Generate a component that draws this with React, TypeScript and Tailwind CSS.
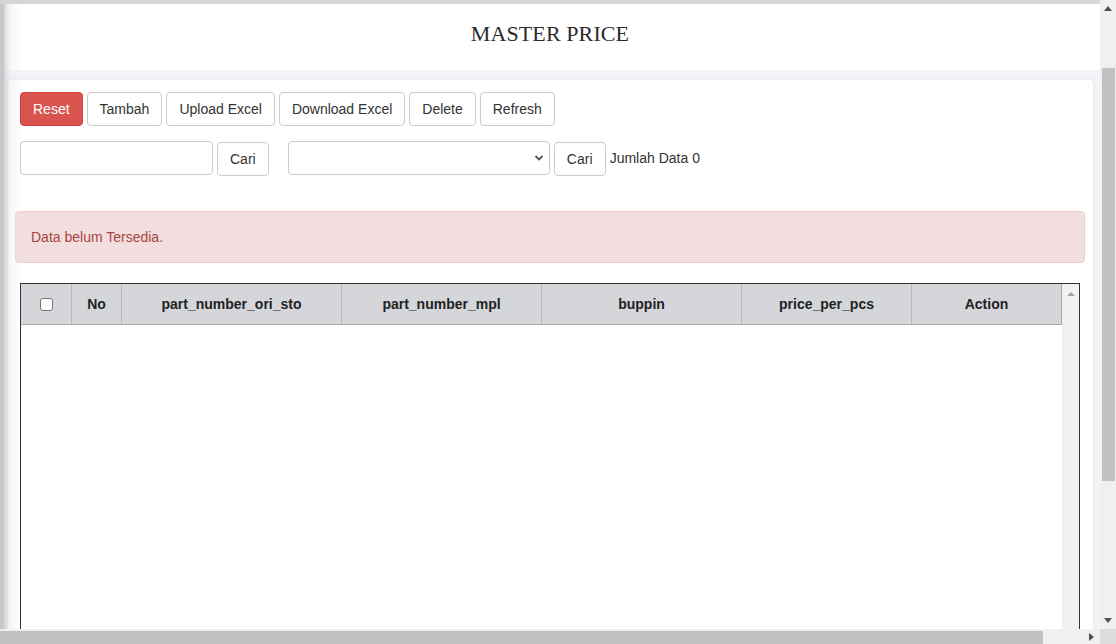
const cols = [
  { label: "No", w: "w-[50px]" },
  { label: "part_number_ori_sto", w: "w-[220px]" },
  { label: "part_number_mpl", w: "w-[200px]" },
  { label: "buppin", w: "w-[200px]" },
  { label: "price_per_pcs", w: "w-[170px]" },
  { label: "Action", w: "w-[150px]" },
];

function Btn({ children, className = "" }: { children: React.ReactNode; className?: string }) {
  return (
    <button
      className={
        "h-[34px] px-[12px] rounded-[4px] border text-[14px] leading-none " +
        (className || "bg-white border-[#ccc] text-[#333]")
      }
    >
      {children}
    </button>
  );
}

export default function App() {
  return (
    <div className="relative w-[1116px] h-[644px] overflow-hidden bg-[#f3f4f8] font-['Liberation_Sans',Arial,sans-serif] text-[#333]">
      <div className="flex h-[629px]">
        {/* page */}
        <div className="relative flex-1 flex flex-col overflow-hidden">
          <div className="shrink-0 h-[4px] bg-[#d6d6d6]" />
          <div className="shrink-0 h-[66px] bg-white flex items-center justify-center">
            <h1 className="text-[22px] text-[#2b2b2b] font-['Liberation_Serif','Times_New_Roman',serif] tracking-[0.1px] mt-[-8px]">
              MASTER PRICE
            </h1>
          </div>
          <div className="flex-1 min-h-0 overflow-hidden pt-[10px] pl-[8px] pr-[7px]">
            <div className="bg-white rounded-[4px] shadow-[0_0_6px_rgba(0,0,0,0.06)] h-[700px] pt-[12px] pl-[12px] pr-[13px]">
              <div className="flex gap-[4px]">
                <Btn className="bg-[#d9534f] border-[#d43f3a] text-white">Reset</Btn>
                <Btn>Tambah</Btn>
                <Btn>Upload Excel</Btn>
                <Btn>Download Excel</Btn>
                <Btn>Delete</Btn>
                <Btn>Refresh</Btn>
              </div>

              <div className="flex items-start mt-[15px]">
                <input className="w-[193px] h-[34px] border border-[#ccc] rounded-[4px] px-3 text-[14px]" />
                <div className="ml-[4px] mt-[1px]">
                  <Btn>Cari</Btn>
                </div>
                <div className="relative ml-[19px] w-[262px] h-[34px] border border-[#ccc] rounded-[4px] bg-white">
                  <svg className="absolute right-[5px] top-[12px]" width="10" height="8" viewBox="0 0 10 8">
                    <path d="M1.5 2 L5 5.5 L8.5 2" fill="none" stroke="#555" strokeWidth="1.8" />
                  </svg>
                </div>
                <div className="ml-[4px] mt-[1px]">
                  <Btn className="bg-white border-[#ccc] text-[#333] w-[52px]">Cari</Btn>
                </div>
                <span className="ml-[4px] mt-[10px] text-[14px] leading-none">Jumlah Data 0</span>
              </div>

              <div className="mt-[35px] ml-[-5px] mr-[-5px] h-[52px] flex items-center px-[15px] bg-[#f2dede] border border-[#ebccd1] rounded-[4px] text-[#a94442] text-[14px]">
                Data belum Tersedia.
              </div>

              <div className="mt-[20px] h-[400px] border border-[#333] border-b-0 flex">
                <div className="flex-1">
                  <div className="flex h-[41px] bg-[#d5d6da] border-b border-[#a9a9a9]">
                    <div className="w-[51px] flex items-center justify-center border-r border-[#b7b8bb]">
                      <span className="w-[13px] h-[13px] rounded-[3px] border border-[#767676] bg-white" />
                    </div>
                    {cols.map((c, i) => (
                      <div
                        key={c.label}
                        className={
                          c.w +
                          " flex items-center justify-center text-[14px] font-bold text-[#222] " +
                          (i < cols.length - 1 ? "border-r border-[#b7b8bb]" : "border-r border-[#a9a9a9]")
                        }
                      >
                        {c.label}
                      </div>
                    ))}
                  </div>
                </div>
                <div className="w-[17px] bg-[#f1f1f1] flex justify-center pt-[7px]">
                  <svg width="8" height="5" viewBox="0 0 8 5">
                    <path d="M0 5 L4 1 L8 5 Z" fill="#a3a3a3" />
                  </svg>
                </div>
              </div>
            </div>
          </div>
          {/* left shadow */}
          <div className="pointer-events-none absolute left-0 top-[4px] bottom-0 w-[20px] bg-gradient-to-r from-[#c4c4c8] via-[#ececee]/50 to-transparent" />
          <div className="pointer-events-none absolute left-0 top-[4px] bottom-0 w-[4px] bg-[#c7c7ca]" />
        </div>

        {/* vertical scrollbar */}
        <div className="w-[16px] bg-[#f0f0f0] flex flex-col items-center">
          <div className="h-[17px] flex items-center justify-center">
            <svg width="8" height="5" viewBox="0 0 8 5">
              <path d="M0 5 L4 0 L8 5 Z" fill="#505050" />
            </svg>
          </div>
          <div className="mt-[51px] w-[13px] h-[413px] bg-[#c1c1c1]" />
          <div className="flex-1" />
          <div className="h-[17px] flex items-center justify-center">
            <svg width="8" height="5" viewBox="0 0 8 5">
              <path d="M0 0 L8 0 L4 5 Z" fill="#505050" />
            </svg>
          </div>
        </div>
      </div>

      {/* horizontal scrollbar */}
      <div className="flex h-[15px]">
        <div className="flex-1 bg-[#f0f0f0] flex items-end">
          <div className="w-[1043px] h-[13px] bg-[#c1c1c1]" />
          <div className="flex-1 h-full flex items-center justify-end pr-[6px]">
            <svg width="5" height="8" viewBox="0 0 5 8">
              <path d="M0 0 L5 4 L0 8 Z" fill="#505050" />
            </svg>
          </div>
        </div>
        <div className="w-[16px] bg-[#dcdcdc]" />
      </div>
    </div>
  );
}
